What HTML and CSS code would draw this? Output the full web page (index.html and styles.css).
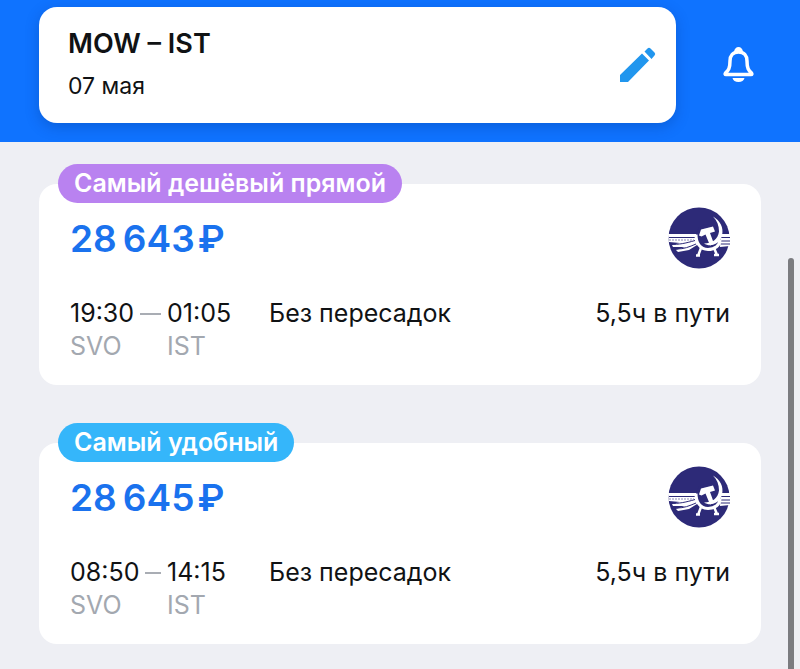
FILE: index.html
```html
<!DOCTYPE html>
<html lang="ru">
<head>
<meta charset="utf-8">
<meta name="viewport" content="width=device-width, initial-scale=1">
<title>MOW – IST</title>
<link rel="stylesheet" href="styles.css">
</head>
<body>
<svg class="symbols" aria-hidden="true">
  <symbol id="airline" viewBox="0 0 62 62">
    <circle cx="31" cy="31" r="30.500" fill="#2d2a78"/>
    <path d="M0 27h28l1 11-8 5-11 2-2-2 9-3-12 0-1-2 8-2-11-1z" fill="#fff"/>
    <path d="M1 30.500h27M3 37.500c8 0 14-1 24-4M9 42c7 0 12-2 19-5" fill="none" stroke="#2d2a78" stroke-width="1"/>
    <path d="M1 33h25" fill="none" stroke="#8c8ab4" stroke-width="1" stroke-dasharray="2 1"/>
    <path d="M53 27h9v12l-10 1z" fill="#fff"/>
    <path d="M53 30.500h9M53 34h9M53 37h9" fill="none" stroke="#2d2a78" stroke-width="1"/>
    <circle cx="40" cy="29" r="12" fill="#2d2a78"/>
    <path d="M28 27.500C28 36 32 42.500 40 42.500c7 0 12-4 12-10" fill="none" stroke="#fff" stroke-width="3"/>
    <path d="M45 9.500c7 4 11 11 9 19-2 9-12 12-18 8 8 0 14-4 15-12 0-6-2-11-6-15z" fill="#fff"/>
    <path d="M31 28.500l2-6 12-3 2 5-5 1.500 4 11-4 1.500-4.500-11-4 2z" fill="#fff"/>
    <path d="M33 41l-3 8M46 41l3 7M28 48.500h4M46 48h5" fill="none" stroke="#fff" stroke-width="2.500"/>
  </symbol>
</svg>

<header class="header">
  <button class="search" type="button">
    <span class="search-text">
      <span class="route">MOW – IST</span>
      <span class="date">07 мая</span>
    </span>
    <svg class="pencil" viewBox="0 0 36 36" aria-hidden="true">
      <path d="M0 28L22 6.500l7 7L8 35H0zM24.500 4.500l3-3q1.500-1.500 3 0l4 4q1.500 1.500 0 3l-3 3.500z" fill="#2196ee"/>
    </svg>
  </button>
  <button class="bell" type="button" aria-label="Уведомления">
    <svg viewBox="0 0 32 36" aria-hidden="true">
      <path d="M15.500 5c-5.500 0-8.500 3.500-8.500 9 0 7.500-1.500 9-4.500 12q-1 1.500.5 1.500h25q1.500 0 .5-1.500c-3-3-4.500-4.500-4.500-12 0-5.500-3-9-8.500-9z" fill="none" stroke="#fff" stroke-width="3.500" stroke-linejoin="round"/>
      <path d="M11 4.500q1-4.500 4.500-4.500t4.500 4.500zM9.500 31h12q-1 4-6 4t-6-4z" fill="#fff"/>
    </svg>
  </button>
</header>

<main class="results">
  <article class="ticket">
    <span class="badge badge-direct">Самый дешёвый прямой</span>
    <div class="top">
      <strong class="price">28&#8201;643&#8202;₽</strong>
      <svg class="logo" role="img" aria-label="Аэрофлот"><use href="#airline"/></svg>
    </div>
    <div class="flight">
      <div class="departure">
        <div class="leaving"><time>19:30</time><span class="dash"></span></div>
        <span class="code">SVO</span>
      </div>
      <div class="arrival"><time>01:05</time><span class="code">IST</span></div>
      <span class="stops">Без пересадок</span>
      <span class="duration">5,5ч в пути</span>
    </div>
  </article>
  <article class="ticket">
    <span class="badge badge-comfort">Самый удобный</span>
    <div class="top">
      <strong class="price">28&#8201;645&#8202;₽</strong>
      <svg class="logo" role="img" aria-label="Аэрофлот"><use href="#airline"/></svg>
    </div>
    <div class="flight">
      <div class="departure">
        <div class="leaving"><time>08:50</time><span class="dash"></span></div>
        <span class="code">SVO</span>
      </div>
      <div class="arrival"><time>14:15</time><span class="code">IST</span></div>
      <span class="stops">Без пересадок</span>
      <span class="duration">5,5ч в пути</span>
    </div>
  </article>
</main>
<div class="scroll-thumb" aria-hidden="true"></div>
</body>
</html>
```
FILE: styles.css
```css
* {
  box-sizing: border-box;
}

body {
  margin: 0;
  min-height: 100vh;
  background: #eeeff4;
  color: #101214;
  font: 25px/33px Inter, "Liberation Sans", sans-serif;
}

button {
  border: 0;
  font: inherit;
  color: inherit;
  cursor: pointer;
}

.symbols {
  display: none;
}

.header {
  display: flex;
  align-items: center;
  gap: 47px;
  padding: 7px 45px 19px 39px;
  background: #0f73ff;
}

.search {
  flex: 1;
  display: flex;
  align-items: center;
  justify-content: space-between;
  padding: 16px 20px 16px 29px;
  border-radius: 18px;
  background: #fff;
  box-shadow: 0 4px 14px rgba(0, 50, 130, 0.3);
  text-align: left;
}

.search-text {
  display: flex;
  flex-direction: column;
}

.route {
  font-size: 27px;
  font-weight: 600;
  line-height: 42px;
}

.date {
  font-size: 23px;
  line-height: 42px;
}

.pencil {
  width: 36px;
  height: 36px;
}

.bell {
  padding: 0;
  background: none;
}

.bell svg {
  display: block;
  width: 32px;
  height: 36px;
}

.results {
  display: grid;
  gap: 58px;
  padding: 42px 39px 25px;
}

.ticket {
  position: relative;
  padding: 23px 31px 22px;
  border-radius: 18px;
  background: #fff;
}

.badge {
  position: absolute;
  top: -20px;
  left: 19px;
  padding: 0 16px;
  border-radius: 20px;
  color: #fff;
  font-weight: 600;
  line-height: 39px;
}

.badge-direct {
  background: #b982f0;
}

.badge-comfort {
  background: #35b6fa;
}

.top {
  display: flex;
  align-items: center;
  justify-content: space-between;
  margin-bottom: 28px;
}

.price {
  color: #1a72ee;
  font-size: 37px;
  font-weight: 600;
}

.logo {
  width: 62px;
  height: 62px;
}

.flight {
  display: flex;
  align-items: flex-start;
}

.departure,
.arrival {
  display: flex;
  flex-direction: column;
}

.departure {
  width: 97px;
}

.arrival {
  width: 102px;
}

.leaving {
  display: flex;
  align-items: center;
  gap: 6px;
  padding-right: 6px;
}

.dash {
  flex: 1;
  height: 2px;
  background: #a9adb4;
}

.code {
  color: #a3a8b0;
}

.duration {
  margin-left: auto;
}

.scroll-thumb {
  position: fixed;
  top: 258px;
  right: 6px;
  bottom: -6px;
  width: 6px;
  border-radius: 3px;
  background: #7b7c80;
}
```
